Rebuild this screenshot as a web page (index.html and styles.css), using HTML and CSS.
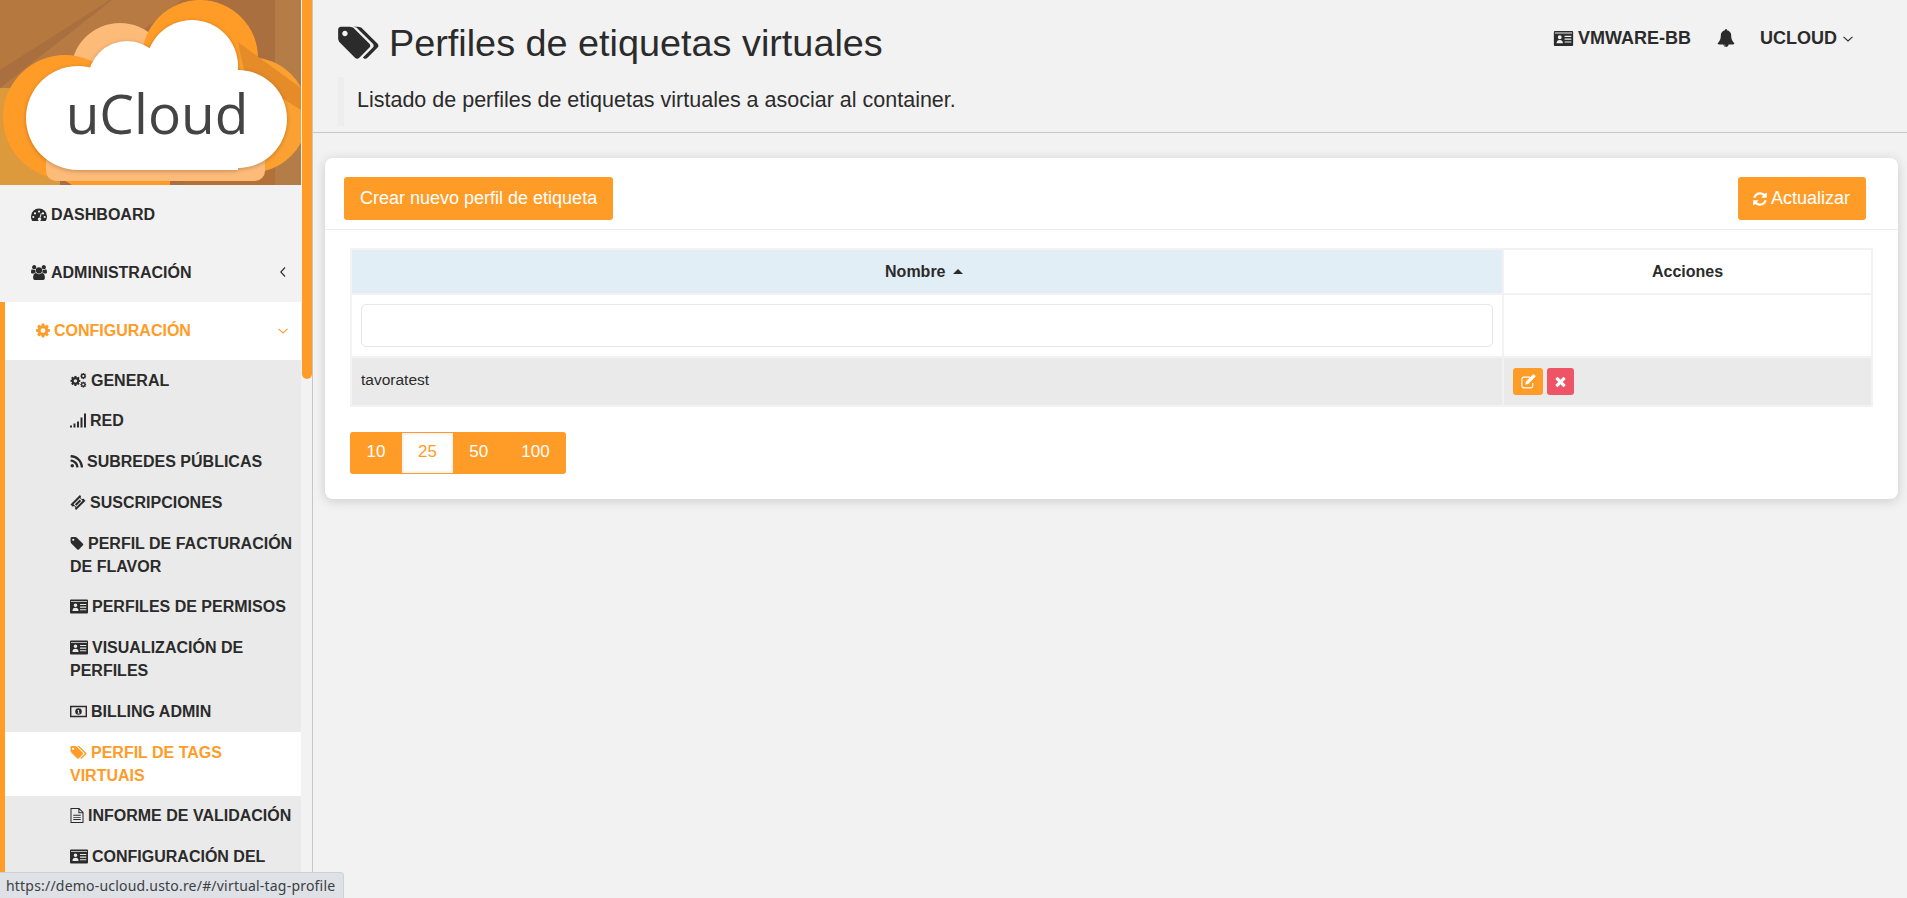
FILE: index.html
```html
<!DOCTYPE html>
<html lang="es">
<head>
  <meta charset="UTF-8" />
  <meta name="viewport" content="width=device-width, initial-scale=1.0" />
  <title>uCloud - Perfiles de etiquetas virtuales</title>
  <link rel="stylesheet" href="styles.css">
</head>
<body>
  <svg class="sprites" aria-hidden="true">
    <symbol id="i-tag" viewBox="0 0 1536 1792"><path d="M448 448q0-53-37.5-90.5t-90.5-37.5-90.5 37.5-37.5 90.5 37.5 90.5 90.5 37.5 90.5-37.5 37.5-90.5zm1067 576q0 53-37 90l-491 492q-39 37-91 37-53 0-90-37l-715-716q-38-37-64.5-101t-26.5-117v-416q0-52 38-90t90-38h416q53 0 117 26.5t102 64.5l715 714q37 39 37 91z"/></symbol>
    <symbol id="i-tags" viewBox="0 0 1920 1792"><path d="M448 448q0-53-37.5-90.5t-90.5-37.5-90.5 37.5-37.5 90.5 37.5 90.5 90.5 37.5 90.5-37.5 37.5-90.5zm1067 576q0 53-37 90l-491 492q-39 37-91 37-53 0-90-37l-715-716q-38-37-64.5-101t-26.5-117v-416q0-52 38-90t90-38h416q53 0 117 26.5t102 64.5l715 714q37 39 37 91zm384 0q0 53-37 90l-491 492q-39 37-91 37-36 0-59-14t-53-45l470-470q37-37 37-90 0-52-37-91l-715-714q-38-38-102-64.5t-117-26.5h224q53 0 117 26.5t102 64.5l715 714q37 39 37 91z"/></symbol>
    <symbol id="i-bell" viewBox="0 0 1792 1792"><path d="M912 1696q0-16-16-16-59 0-101.5-42.5t-42.5-101.5q0-16-16-16t-16 16q0 73 51.5 124.5t124.5 51.5q16 0 16-16zm816-288q0 52-38 90t-90 38h-448q0 106-75 181t-181 75-181-75-75-181h-448q-52 0-90-38t-38-90q50-42 91-88t85-119.5 74.5-158.5 50-206 19.5-260q0-152 117-282.5t307-158.5q-8-19-8-39 0-40 28-68t68-28 68 28 28 68q0 20-8 39 190 28 307 158.5t117 282.5q0 139 19.5 260t50 206 74.5 158.5 85 119.5 91 88z"/></symbol>
    <symbol id="i-refresh" viewBox="0 0 1792 1792"><path d="M1639 1056q0 5-1 7-64 268-268 434.5t-478 166.5q-146 0-282.5-55t-243.5-157l-129 129q-19 19-45 19t-45-19-19-45v-448q0-26 19-45t45-19h448q26 0 45 19t19 45-19 45l-137 137q71 66 161 102t187 36q134 0 250-65t186-179q11-17 53-117 8-23 30-23h192q13 0 22.5 9.5t9.5 22.5zm25-800v448q0 26-19 45t-45 19h-448q-26 0-45-19t-19-45 19-45l138-138q-148-137-349-137-134 0-250 65t-186 179q-11 17-53 117-8 23-30 23h-199q-13 0-22.5-9.5t-9.5-22.5v-7q65-268 270-434.5t480-166.5q146 0 284 55.5t245 156.5l130-129q19-19 45-19t45 19 19 45z"/></symbol>
    <symbol id="i-times" viewBox="0 0 1792 1792"><path d="M1490 1322q0 40-28 68l-136 136q-28 28-68 28t-68-28l-294-294-294 294q-28 28-68 28t-68-28l-136-136q-28-28-28-68t28-68l294-294-294-294q-28-28-28-68t28-68l136-136q28-28 68-28t68 28l294 294 294-294q28-28 68-28t68 28l136 136q28 28 28 68t-28 68l-294 294 294 294q28 28 28 68z"/></symbol>
    <symbol id="i-cog" viewBox="128 128 1536 1536"><path d="M1152 896q0-106-75-181t-181-75-181 75-75 181 75 181 181 75 181-75 75-181zm512-109v222q0 12-8 23t-20 13l-185 28q-19 54-39 91 35 50 107 138 10 12 10 25t-9 23q-27 37-99 108t-94 71q-12 0-26-9l-138-108q-44 23-91 38-16 136-29 186-7 28-36 28h-222q-14 0-24.5-8.5t-11.5-21.5l-28-184q-49-16-90-37l-141 107q-10 9-25 9-14 0-25-11-126-114-165-168-7-10-7-23 0-12 8-23 15-21 51-66.5t54-70.5q-27-50-41-99l-183-27q-13-2-21-12.5t-8-23.5v-222q0-12 8-23t19-13l186-28q14-46 39-92-40-57-107-138-10-12-10-24 0-10 9-23 26-36 98.5-107.5t94.5-71.5q13 0 26 10l138 107q44-23 91-38 16-136 29-186 7-28 36-28h222q14 0 24.5 8.5t11.5 21.5l28 184q49 16 90 37l142-107q9-9 24-9 13 0 25 10 129 119 165 170 7 8 7 22 0 12-8 23-15 21-51 66.5t-54 70.5q26 50 41 98l183 28q13 2 21 12.5t8 23.5z"/></symbol>
    <symbol id="i-cogs" viewBox="0 0 24 22">
      <use href="#i-cog" x="0" y="4" width="15" height="15"/>
      <use href="#i-cog" x="14.5" y="0" width="9" height="9"/>
      <use href="#i-cog" x="14.5" y="12.5" width="9" height="9"/>
    </symbol>
    <symbol id="i-users" viewBox="0 0 1920 1792"><path d="M593 896q-162 5-265 128h-134q-82 0-138-40.5t-56-118.5q0-353 124-353 6 0 43.5 21t97.5 42.5 119 21.5q67 0 133-23-5 37-5 66 0 139 81 256zm1071 637q0 120-73 189.5t-194 69.5h-874q-121 0-194-69.5t-73-189.5q0-53 3.5-103.5t14-109 26.5-108.5 43-97.5 62-81 85.5-53.5 111.5-20q10 0 43 21.5t73 48 107 48 135 21.5 135-21.5 107-48 73-48 43-21.5q61 0 111.5 20t85.5 53.5 62 81 43 97.5 26.5 108.5 14 109 3.5 103.5zm-1024-1277q0 106-75 181t-181 75-181-75-75-181 75-181 181-75 181 75 75 181zm704 384q0 159-112.5 271.5t-271.5 112.5-271.5-112.5-112.5-271.5 112.5-271.5 271.5-112.5 271.5 112.5 112.5 271.5zm576 225q0 78-56 118.5t-138 40.5h-134q-103-123-265-128 81-117 81-256 0-29-5-66 66 23 133 23 59 0 119-21.5t97.5-42.5 43.5-21q124 0 124 353zm-128-609q0 106-75 181t-181 75-181-75-75-181 75-181 181-75 181 75 75 181z"/></symbol>
    <symbol id="i-rss" viewBox="128 128 1472 1472"><path d="M576 1344q0 80-56 136t-136 56-136-56-56-136 56-136 136-56 136 56 56 136zm512 123q2 28-17 48-18 21-47 21h-135q-25 0-43-16.5t-20-41.5q-22-229-184.5-391.5t-391.5-184.5q-25-2-41.5-20t-16.5-43v-135q0-29 21-47 17-17 43-17h5q160 13 306 80.5t259 181.5q114 113 181.5 259t80.5 306zm512 2q2 27-18 47-18 20-46 20h-143q-26 0-44.5-17.5t-19.5-42.5q-12-215-101-408.5t-231.5-336-336-231.5-408.5-102q-25-1-42.5-19.5t-17.5-43.5v-143q0-28 20-46 18-18 44-18h3q262 13 501.5 120t425.5 294q187 186 294 425.5t120 501.5z"/></symbol>
    <symbol id="i-dashboard" viewBox="0 0 16 14"><path fill-rule="evenodd" d="M8 1a8 8 0 0 0-8 8c0 1.700.5 3.200 1.300 4.500h13.400A8 8 0 0 0 16 9a8 8 0 0 0-8-8zM8 3a1.100 1.100 0 1 1 0 2.200A1.100 1.100 0 0 1 8 3zM4 4.800A1.100 1.100 0 1 1 4 7a1.100 1.100 0 0 1 0-2.200zm8 0A1.100 1.100 0 1 1 12 7a1.100 1.100 0 0 1 0-2.200zM2.300 8.400a1.100 1.100 0 1 1 0 2.200 1.100 1.100 0 0 1 0-2.200zm11.400 0a1.100 1.100 0 1 1 0 2.200 1.100 1.100 0 0 1 0-2.200zM9.900 5.600l.9.3-1.400 4.600a1.600 1.600 0 1 1-1.900.1 1.600 1.600 0 0 1 1-.4z"/></symbol>
    <symbol id="i-signal" viewBox="0 0 16 14"><path d="M0 12h2v2H0zM3.500 10h2v4h-2zM7 8h2v6H7zM10.500 4h2v10h-2zM14 0h2v14h-2z"/></symbol>
    <symbol id="i-ticket" viewBox="0 0 16 16"><path fill-rule="evenodd" d="M10 0l1.300 1.300a1.600 1.600 0 0 0 2.300 2.300L16 6l-10 10-1.300-1.300a1.600 1.600 0 0 0-2.300-2.300L0 10zM9.900 3.200L3.200 9.900l3 3 6.700-6.700zm0 1.600l1.500 1.500-5.200 5.100-1.500-1.500z"/></symbol>
    <symbol id="i-card" viewBox="0 0 18 14"><path fill-rule="evenodd" d="M1 0h16a1 1 0 0 1 1 1v12a1 1 0 0 1-1 1H1a1 1 0 0 1-1-1V1a1 1 0 0 1 1-1zM1 1.500v.8h16v-.8zM5.500 4a1.800 1.800 0 1 0 0 3.600 1.800 1.800 0 0 0 0-3.600zM2.500 11.500h6c0-2-.9-3.200-3-3.200s-3 1.200-3 3.200zM10 4.500v1.100h6.300V4.500zm0 2.600v1.100h6.300V7.100zm0 2.600v1.100h6.300V9.700z"/></symbol>
    <symbol id="i-money" viewBox="0 0 18 12"><path fill-rule="evenodd" d="M0 0h18v12H0zm1.500 1.500v9h15v-9zM9 2.500a3.500 3.500 0 1 1 0 7 3.500 3.500 0 0 1 0-7zM8 4.500v.8h.6v2H8v.7h2.300v-.7h-.7V4.500z"/></symbol>
    <symbol id="i-file" viewBox="0 0 14 16"><path fill="none" stroke="currentColor" stroke-width="1.100" d="M.6.600h8.600l4.200 4.200v10.600H.6zM9 .6v4.400h4.400"/><path d="M3 7.300h8v1H3zM3 9.500h8v1H3zM3 11.700h8v1H3z"/></symbol>
    <symbol id="i-edit" viewBox="0 0 16 16"><path fill="none" stroke="currentColor" stroke-width="1.200" d="M12.500 9.500v3.300a2 2 0 0 1-2 2H3a2 2 0 0 1-2-2V5.300a2 2 0 0 1 2-2h6.500"/><path d="M13.300 0l2.500 2.500-8.100 8.100-3.100.7.700-3.200z"/></symbol>
  </svg>

  <div class="app">
    <aside class="sidebar">
      <div class="sidebar-inner">
        <div class="logo">
          <svg viewBox="0 0 301 185" width="301" height="185" aria-label="uCloud">
            <rect width="301" height="185" fill="#a96f3e"/>
            <path d="M0 0H110L0 70z" fill="#b5793f"/>
            <path d="M0 88L112 0h70L0 140z" fill="#b67a42"/>
            <path d="M0 88H60V185H0z" fill="#dc9a3d"/>
            <path d="M275 0h26v185h-26z" fill="#b47c47"/>
            <path d="M60 185h120l90-70 5 70z" fill="#b27237"/>
            <circle cx="120" cy="72" r="49" fill="#fdbb7a"/>
            <circle cx="200" cy="58" r="58" fill="#ff9c28"/>
            <circle cx="65" cy="117" r="62" fill="#ff9c28"/>
            <path d="M40 165h130v20H72z" fill="#ff9c28"/>
            <circle cx="250" cy="115" r="58" fill="#fba132"/>
            <path d="M238 42l63 46v22l-56-35z" fill="#e58c28"/>
            <rect x="46" y="150" width="219" height="31" rx="10" fill="#fdbb7a"/>
            <g class="logo-cloud">
              <circle cx="78" cy="118" r="52"/>
              <circle cx="127" cy="80" r="39"/>
              <circle cx="192" cy="66" r="46"/>
              <circle cx="238" cy="119" r="49"/>
              <rect x="78" y="90" width="160" height="80"/>
            </g>
            <text class="logo-text" x="157" y="134" text-anchor="middle">uCloud</text>
          </svg>
        </div>
        <nav class="menu">
          <a class="menu-item"><svg class="icon w16"><use href="#i-dashboard"/></svg>DASHBOARD</a>
          <a class="menu-item has-arrow"><svg class="icon w16"><use href="#i-users"/></svg>ADMINISTRACIÓN
            <svg class="arrow" viewBox="0 0 6 10"><path d="M5 .5L.8 5 5 9.500"/></svg></a>
          <div class="menu-open">
            <a class="menu-item active"><svg class="icon w14"><use href="#i-cog"/></svg>CONFIGURACIÓN
              <svg class="arrow down" viewBox="0 0 10 6"><path d="M.5 .8L5 5 9.500 .8"/></svg></a>
            <ul class="submenu">
              <li><svg class="icon w17"><use href="#i-cogs"/></svg>GENERAL</li>
              <li><svg class="icon w16"><use href="#i-signal"/></svg>RED</li>
              <li><svg class="icon w13"><use href="#i-rss"/></svg>SUBREDES PÚBLICAS</li>
              <li><svg class="icon w16"><use href="#i-ticket"/></svg>SUSCRIPCIONES</li>
              <li><svg class="icon w14"><use href="#i-tag"/></svg>PERFIL DE FACTURACIÓN DE FLAVOR</li>
              <li><svg class="icon w18"><use href="#i-card"/></svg>PERFILES DE PERMISOS</li>
              <li><svg class="icon w18"><use href="#i-card"/></svg>VISUALIZACIÓN DE PERFILES</li>
              <li><svg class="icon w17"><use href="#i-money"/></svg>BILLING ADMIN</li>
              <li class="current"><svg class="icon w17"><use href="#i-tags"/></svg>PERFIL DE TAGS VIRTUAIS</li>
              <li><svg class="icon w14"><use href="#i-file"/></svg>INFORME DE VALIDACIÓN</li>
              <li><svg class="icon w18"><use href="#i-card"/></svg>CONFIGURACIÓN DEL</li>
            </ul>
          </div>
        </nav>
      </div>
      <div class="scrolltrack"><div class="scrollthumb"></div></div>
    </aside>

    <main class="main">
      <header class="page-head">
        <div class="head-top">
          <h1 class="page-title"><svg class="title-icon"><use href="#i-tags"/></svg>Perfiles de etiquetas virtuales</h1>
          <div class="top-nav">
            <span class="top-link"><svg class="top-card"><use href="#i-card"/></svg>VMWARE-BB</span>
            <svg class="top-bell"><use href="#i-bell"/></svg>
            <span class="top-link">UCLOUD<svg class="arrow top-arrow" viewBox="0 0 10 6"><path d="M.5 .8L5 5 9.500 .8"/></svg></span>
          </div>
        </div>
        <p class="page-desc">Listado de perfiles de etiquetas virtuales a asociar al container.</p>
      </header>

      <section class="card">
        <div class="card-head">
          <button class="btn">Crear nuevo perfil de etiqueta</button>
          <button class="btn btn-refresh"><svg class="refresh-icon"><use href="#i-refresh"/></svg>Actualizar</button>
        </div>
        <div class="card-body">
          <table class="grid">
            <thead>
              <tr>
                <th class="sorted">Nombre <span class="caret"></span></th>
                <th class="col-actions">Acciones</th>
              </tr>
              <tr class="filter-row">
                <td><input class="filter" type="text"></td>
                <td></td>
              </tr>
            </thead>
            <tbody>
              <tr class="data-row">
                <td>tavoratest</td>
                <td>
                  <div class="actions">
                    <button class="act act-edit" title="Editar"><svg><use href="#i-edit"/></svg></button>
                    <button class="act act-del" title="Eliminar"><svg><use href="#i-times"/></svg></button>
                  </div>
                </td>
              </tr>
            </tbody>
          </table>
          <div class="pager">
            <a>10</a>
            <a class="on">25</a>
            <a>50</a>
            <a>100</a>
          </div>
        </div>
      </section>
    </main>
  </div>

  <div class="status-bubble">https://demo-ucloud.usto.re/#/virtual-tag-profile</div>
</body>
</html>
```

FILE: styles.css
```css
* {
  box-sizing: border-box;
}
html, body {
  height: 100%;
}
body {
  margin: 0;
  background: #f2f2f2;
  color: #2b2b2b;
  font-family: "Liberation Sans", Arial, sans-serif;
  overflow: hidden;
}
.sprites {
  position: absolute;
  width: 0;
  height: 0;
}
svg {
  fill: currentColor;
}
.app {
  display: flex;
  height: 898px;
}

/* sidebar */
.sidebar {
  display: flex;
  flex: none;
  width: 313px;
  height: 100%;
  border-right: 1px solid #c6c6c6;
  overflow: hidden;
}
.sidebar-inner {
  width: 301px;
  flex: none;
  overflow: hidden;
}
.scrolltrack {
  margin-left: 1px;
  width: 10px;
}
.scrollthumb {
  height: 379px;
  background: #ff9c28;
  border-radius: 0 0 5px 5px;
}
.logo {
  height: 185px;
}
.logo svg {
  display: block;
}
.logo-cloud {
  fill: #fff;
  filter: drop-shadow(0 1px 2px rgba(90, 50, 10, .35));
}
.logo-text {
  font-family: "Open Sans", sans-serif;
  font-size: 55px;
  fill: #444;
}
.menu {
  font-size: 16px;
  font-weight: bold;
  line-height: 23px;
}
.menu-item {
  display: flex;
  align-items: center;
  height: 58px;
  padding-left: 31px;
}
.icon {
  height: 15px;
  flex: none;
  margin-right: 4px;
}
.w13 { width: 13px; }
.w14 { width: 14px; }
.w16 { width: 16px; }
.w17 { width: 17px; }
.w18 { width: 18px; }
.arrow {
  fill: none;
  stroke: currentColor;
  stroke-width: 1.1;
  width: 6px;
  height: 10px;
  margin-left: auto;
  margin-right: 15px;
}
.arrow.down {
  width: 10px;
  height: 6px;
  margin-right: 13px;
}
.menu-open {
  margin-top: 1px;
  border-left: 5px solid #ff9c28;
}
.menu-item.active {
  background: #fff;
  color: #ff9c28;
  padding-bottom: 1px;
}
.submenu {
  margin: 0;
  padding: 0;
  list-style: none;
  background: #eaeaea;
}
.submenu li {
  padding: 8.6px 5px 9.15px 65px;
}
.submenu .icon {
  vertical-align: -2px;
}
.submenu .current {
  padding-top: 9.4px;
  padding-bottom: 8.35px;
  background: #fff;
  color: #ff9c28;
}

/* page header */
.main {
  flex: 1;
  min-width: 0;
}
.page-head {
  height: 133px;
  border-bottom: 1px solid #c6c6c6;
  padding: 0 0 0 25px;
}
.head-top {
  display: flex;
  justify-content: space-between;
  height: 77px;
}
.page-title {
  margin: 22px 0 0;
  height: 42px;
  font-size: 37.8px;
  font-weight: normal;
  line-height: 42px;
  display: flex;
  align-items: center;
}
.title-icon {
  width: 41px;
  height: 38px;
  margin-right: 10px;
}
.top-nav {
  display: flex;
  align-items: center;
  height: 28px;
  margin-top: 24px;
  margin-right: 54px;
}
.top-link {
  display: flex;
  align-items: center;
  font-size: 18px;
  font-weight: bold;
}
.top-card {
  width: 21px;
  height: 15px;
  margin-right: 4px;
}
.top-bell {
  width: 18px;
  height: 18px;
  margin: 0 25px 0 26px;
}
.top-arrow {
  width: 10px;
  height: 6px;
  margin: 1px 0 0 6px;
}
.page-desc {
  margin: 0;
  height: 49px;
  border-left: 6px solid #ededed;
  padding-left: 13px;
  font-size: 21.5px;
  line-height: 47px;
}

/* card */
.card {
  margin: 25px 9px 0 12px;
  background: #fff;
  border-radius: 8px;
  box-shadow: 0 2px 12px rgba(0, 0, 0, .16);
  height: 341px;
}
.card-head {
  display: flex;
  justify-content: space-between;
  align-items: flex-start;
  height: 72px;
  padding: 19px 32px 0 19px;
  border-bottom: 1px solid #ececec;
}
.btn {
  height: 43px;
  padding: 0 16px;
  border: none;
  border-radius: 3px;
  background: #ff9c28;
  color: #fff;
  font-family: inherit;
  font-size: 18px;
}
.btn-refresh {
  display: flex;
  align-items: center;
  padding-left: 14px;
}
.refresh-icon {
  width: 16px;
  height: 16px;
  margin-right: 3px;
}
.card-body {
  padding: 18px 25px 0;
}
.grid {
  width: 1523px;
  table-layout: fixed;
  border-collapse: collapse;
  border: 2px solid #f2f2f2;
  font-size: 16px;
}
.grid th, .grid td {
  border: 2px solid #f2f2f2;
  padding: 0 9px;
}
.grid th {
  height: 45px;
  text-align: center;
}
.sorted {
  background: #e2eef6;
}
.col-actions {
  width: 369px;
}
.caret {
  display: inline-block;
  margin: 0 6px 0 3px;
  vertical-align: 3px;
  border-left: 5px solid transparent;
  border-right: 5px solid transparent;
  border-bottom: 5px solid #2b2b2b;
}
.filter-row td {
  height: 63px;
}
.filter {
  display: block;
  width: 100%;
  height: 43px;
  border: 1px solid #e6e6e6;
  border-radius: 5px;
  background: #fff;
}
.data-row td {
  height: 49px;
  background: #eaeaea;
  font-size: 15.5px;
  padding-bottom: 4px;
}
.actions {
  display: flex;
  gap: 4px;
  padding-top: 4px;
}
.act {
  height: 27px;
  width: 30px;
  border: none;
  border-radius: 3px;
  padding: 0;
  color: #fff;
  display: flex;
  align-items: center;
  justify-content: center;
}
.act svg {
  width: 15px;
  height: 15px;
}
.act-edit {
  background: #ff9c28;
}
.act-del {
  width: 27px;
  background: #ef5366;
}
.pager {
  display: inline-flex;
  margin-top: 25px;
  height: 42px;
  background: #ff9c28;
  border-radius: 3px;
  color: #fff;
  font-size: 17px;
}
.pager a {
  padding: 0 16.5px;
  line-height: 40px;
}
.pager a:last-child {
  padding-right: 16px;
}
.pager .on {
  background: #fff;
  color: #ff9c28;
  margin: 1px 0;
  padding: 0 16px;
  line-height: 38px;
  box-shadow: inset 0 0 4px rgba(0, 0, 0, .12);
}

/* browser link preview */
.status-bubble {
  position: fixed;
  left: 0;
  bottom: 0;
  width: 344px;
  height: 26px;
  padding: 3px 0 0 6px;
  background: #dee1e6;
  border-top: 1px solid #cdd0d5;
  border-right: 1px solid #cdd0d5;
  border-radius: 0 4px 0 0;
  color: #3c4043;
  font-family: "Noto Sans", sans-serif;
  font-size: 14px;
  letter-spacing: .2px;
  white-space: nowrap;
}
```
